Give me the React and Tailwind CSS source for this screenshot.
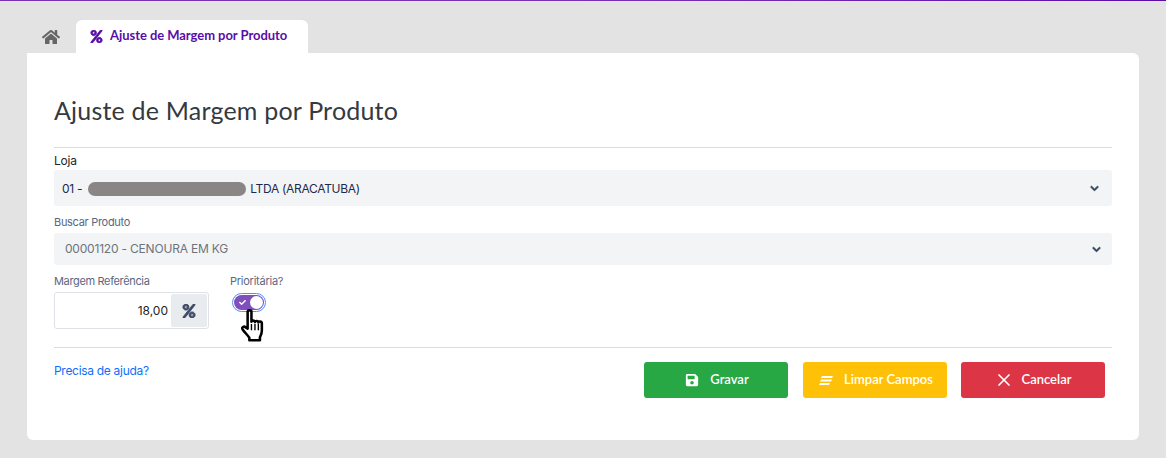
import React from 'react';
import { FaHome, FaPercent, FaSave, FaChevronDown, FaCheck } from 'react-icons/fa';
import { X } from 'lucide-react';

const HEAD = "font-['Lato',sans-serif]";
const BODY = "font-['Inter',sans-serif]";

const ClearIcon = () => (
    <svg width="14" height="9" viewBox="0 0 14 9" fill="currentColor">
        <polygon points="3,0 14,0 13,2 2,2" />
        <polygon points="2,3.500 13,3.500 12,5.500 1,5.500" />
        <polygon points="1,7 11,7 10,9 0,9" />
    </svg>
);

const HandCursor = () => (
    <svg width="28" height="35" viewBox="0 0 26 33" className="absolute left-[7px] top-[14px]">
        <path
            d="M7 3.500c0-1.900 3.600-1.900 3.600 0V13c0-1.500 3.300-1.500 3.300.300 0-1.500 3.200-1.400 3.200.400 0-1.300 3.300-1.200 3.300.700v7.100c0 2.600-.9 4-1.800 6v3H8.600v-2.500c-2-2.800-4.400-5-6.300-7.800-1.200-1.900 1.200-3.600 2.800-1.900L7 19.500z"
            fill="#fff"
            stroke="#000"
            strokeWidth="2.400"
            strokeLinejoin="round"
        />
        <path d="M10.600 15v6M13.900 15v6M17.100 15v6" stroke="#000" strokeWidth="1.300" />
    </svg>
);

const ActionButton = ({ bg, icon, label, className = '' }) => (
    <button className={`h-9 w-[144px] pl-[2px] rounded-[3px] ${bg} ${className} text-white flex items-center justify-center gap-[11px] text-[13px] font-semibold ${HEAD}`}>
        {icon}
        {label}
    </button>
);

export default function App() {
    return (
        <div className={`h-[458px] w-[1166px] overflow-hidden bg-[#e3e3e3] ${BODY}`}>
            <div className="h-px bg-gradient-to-r from-[#7b2fb5] via-[#7b2fb5] to-[#5a0ea8]"></div>

            <div className="pl-[27px] pr-[27px] pt-[19px]">
                {/* Tabs */}
                <div className="flex items-stretch h-[33px]">
                    <div className="w-[49px] flex justify-center pt-[8px] pr-[2px] text-[#666666]">
                        <FaHome size={18} />
                    </div>
                    <div className={`w-[232px] bg-white rounded-t-[6px] flex items-center pl-[14px] gap-[7px] pb-[1px] text-[#5a0ea8] text-[13px] font-bold tracking-[-0.05px] ${HEAD}`}>
                        <FaPercent size={13} stroke="currentColor" strokeWidth={30} />
                        <span>Ajuste de Margem por Produto</span>
                    </div>
                </div>

                {/* Card */}
                <div className="w-[1112px] h-[387px] bg-white rounded-b-[6px] rounded-tr-[6px] px-[27px] pt-[42px]">
                    <h1 className={`text-[25px] leading-[30px] text-[#343a40] tracking-[0.2px] ${HEAD}`}>Ajuste de Margem por Produto</h1>
                    <div className="h-px bg-[#dcdcdc] mt-[22px]"></div>

                    <label className="block text-[12px] leading-[16px] text-[#212529] mt-[5px] tracking-[-0.2px]">Loja</label>
                    <div className="mt-[1px] h-9 pl-[8px] pr-[13px] flex items-center justify-between bg-[#f3f4f6] rounded-[3px] text-[#1b2a4e] text-[12px] tracking-[-0.3px]">
                        <div className="flex items-center pt-[1px]">
                            <span>01 -</span>
                            <span className="w-[158px] h-[14px] bg-[#8a8686] rounded-full ml-[6px] mr-[4px]"></span>
                            <span>LTDA (ARACATUBA)</span>
                        </div>
                        <FaChevronDown size={9} stroke="currentColor" strokeWidth={40} className="text-[#33415c]" />
                    </div>

                    <label className="block text-[11px] leading-[14px] text-[#5a6782] mt-[9px] tracking-[-0.3px]">Buscar Produto</label>
                    <div className="mt-[4px] h-[32px] pl-[11px] pr-[11px] flex items-center justify-between bg-[#f3f4f6] rounded-[3px] text-[#6c757d] text-[12px] tracking-[-0.2px]">
                        <span>00001120 - CENOURA EM KG</span>
                        <FaChevronDown size={9} stroke="currentColor" strokeWidth={40} className="text-[#33415c]" />
                    </div>

                    <div className="flex mt-[9px]">
                        <div className="w-[155px]">
                            <label className="block text-[11px] leading-[14px] text-[#5a6782] tracking-[-0.35px]">Margem Referência</label>
                            <div className="mt-[4px] h-[37px] border border-[#dee2e6] rounded-[3px] flex items-center justify-end p-[1px] text-[12px] text-[#212529]">
                                <span className="mr-[3px] pt-[1px]">18,00</span>
                                <div className="w-[36px] h-[33px] bg-[#e9ecef] rounded-[2px] flex items-center justify-center text-[#3e4a66]">
                                    <FaPercent size={14} stroke="currentColor" strokeWidth={30} />
                                </div>
                            </div>
                        </div>
                        <div className="ml-[21px]">
                            <label className="block text-[11px] leading-[14px] text-[#5a6782] tracking-[-0.25px]">Prioritária?</label>
                            <div className="relative mt-[5px] ml-[2px] w-[34px] h-[19px] rounded-full border border-[#4d90fe] p-[1px]">
                                <div className="w-full h-full rounded-full bg-[#7e4fbd] flex items-center justify-between pl-[5px] pr-[1px]">
                                    <FaCheck size={7} className="text-white" />
                                    <span className="w-[13px] h-[13px] rounded-full bg-white"></span>
                                </div>
                                <HandCursor />
                            </div>
                        </div>
                    </div>

                    <div className="h-px bg-[#dcdcdc] mt-[18px]"></div>

                    <div className="flex justify-between items-start mt-[14px] pr-[7px]">
                        <a className="text-[12px] leading-[18px] text-[#0d6efd] tracking-[-0.3px]">Precisa de ajuda?</a>
                        <div className="flex gap-[15px]">
                            <ActionButton bg="bg-[#28a745]" icon={<FaSave size={14} />} label="Gravar" />
                            <ActionButton bg="bg-[#ffc107]" icon={<ClearIcon />} label="Limpar Campos" />
                            <ActionButton bg="bg-[#dc3545]" className="-ml-px" icon={<X size={20} className="-mx-[3px]" />} label="Cancelar" />
                        </div>
                    </div>
                </div>
            </div>
        </div>
    );
}
